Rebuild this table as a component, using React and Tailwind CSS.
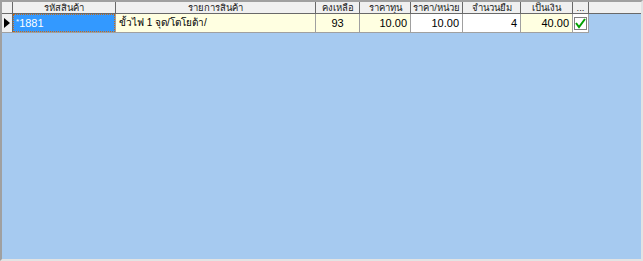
import React from 'react';

const cols = [
    { w: 'w-[103px]', label: 'รหัสสินค้า' },
    { w: 'w-[200px]', label: 'รายการสินค้า' },
    { w: 'w-[44px]', label: 'คงเหลือ' },
    { w: 'w-[51px]', label: 'ราคาทุน' },
    { w: 'w-[52px]', label: 'ราคา/หน่วย' },
    { w: 'w-[58px]', label: 'จำนวนยืม' },
    { w: 'w-[52px]', label: 'เป็นเงิน' },
    { w: 'w-[16px]', label: '...' },
];

const Cell = ({ w, bg, align = 'justify-end', children }) => (
    <div className={`${w} ${bg} ${align} shrink-0 h-full flex items-center border-r border-[#a0a0a0] px-[3px] overflow-hidden whitespace-nowrap`}>
        {children}
    </div>
);

const App = () => {
    return (
        <div className="w-[643px] h-[261px] bg-[#a6caf0] border-2 border-t-[#a0a0a0] border-l-[#a0a0a0] border-r-[#e3e3e3] border-b-[#e3e3e3] text-[11px] text-black leading-none overflow-hidden" style={{ fontFamily: '"Liberation Sans", "Noto Sans", sans-serif' }}>
            {/* header */}
            <div className="flex h-[12px] bg-[#f0f0f0] border-b border-[#696969]">
                <div className="w-[11px] shrink-0 h-full border-r border-[#696969]"></div>
                {cols.map((c) => (
                    <div key={c.label} className={`${c.w} shrink-0 h-full flex items-center justify-center border-r border-[#696969] overflow-hidden whitespace-nowrap text-[9.5px] text-[#222]`}>
                        {c.label}
                    </div>
                ))}
            </div>

            {/* data row */}
            <div className="flex h-[19px] border-b border-[#a0a0a0] w-[587px]">
                <div className="w-[11px] shrink-0 h-full bg-[#f0f0f0] border-r border-[#696969] flex items-center justify-center">
                    <svg width="6" height="10" viewBox="0 0 6 10"><path d="M0 0 L6 5 L0 10 Z" fill="#000" /></svg>
                </div>
                <div className="w-[103px] shrink-0 h-full bg-[#a0a0a0] border-r border-[#a0a0a0] p-0">
                    <div className="h-full bg-[#3399ff] border border-dotted border-[#c96a14] flex items-center px-[2px] text-white">
                        <span className="text-[8px] self-start mt-[3px]">*</span>1881
                    </div>
                </div>
                <Cell w="w-[200px]" bg="bg-[#ffffe1]" align="justify-start"><span className="text-[10px]">ขั้วไฟ 1 จุด/โตโยต้า/</span></Cell>
                <Cell w="w-[44px]" bg="bg-[#ffffe1]" align="justify-center">93</Cell>
                <Cell w="w-[51px]" bg="bg-[#ffffe1]">10.00</Cell>
                <Cell w="w-[52px]" bg="bg-white">10.00</Cell>
                <Cell w="w-[58px]" bg="bg-white">4</Cell>
                <Cell w="w-[52px]" bg="bg-[#ffffe1]">40.00</Cell>
                <div className="w-[16px] shrink-0 h-full bg-white border-r border-[#a0a0a0] flex items-center justify-center">
                    <div className="w-[13px] h-[13px] border border-[#808080] bg-white flex items-center justify-center">
                        <svg width="11" height="11" viewBox="0 0 11 11"><path d="M1 5 L4 9 L10 1" stroke="#00a000" strokeWidth="2" fill="none" /></svg>
                    </div>
                </div>
            </div>
        </div>
    );
};

export default App;
